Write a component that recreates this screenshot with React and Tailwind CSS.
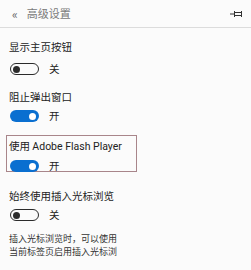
import React from "react";

const FONT = { fontFamily: '"Noto Sans CJK SC", "Noto Sans", sans-serif' };
const LATIN = { fontFamily: 'Roboto, "Noto Sans", sans-serif' };

const Toggle = ({ on }) =>
    on ? (
        <div className="w-[29px] h-[12px] rounded-full bg-[#0a6fd0] flex items-center justify-end pr-[3px]">
            <div className="w-[7px] h-[7px] rounded-full bg-white" />
        </div>
    ) : (
        <div className="w-[29px] h-[12px] rounded-full border-[1.5px] border-[#2b2b2b] flex items-center pl-[2px]">
            <div className="w-[7px] h-[7px] rounded-full bg-[#2b2b2b]" />
        </div>
    );

const Setting = ({ label, on, gap }) => (
    <div className="flex flex-col">
        <div className="h-[14px] leading-[14px] text-[10.5px] text-[#222] whitespace-nowrap">{label}</div>
        <div className={`flex items-center h-[14px] ${gap}`}>
            <div className="ml-[1px]">
                <Toggle on={on} />
            </div>
            <span className="ml-[10px] text-[10.5px] text-[#222] leading-[14px]">{on ? "开" : "关"}</span>
        </div>
    </div>
);

const PinIcon = () => (
    <svg width="14" height="8" viewBox="0 0 14 8" fill="none" stroke="#333" strokeWidth="1">
        <path d="M0 4H4.5M4.5 1V7M4.5 2.5H11.5V5.5H4.5M11.5 1V7" />
    </svg>
);

export default function App() {
    return (
        <div className="w-[251px] h-[270px] bg-[#fbfbfb] overflow-hidden" style={FONT}>
            <div className="h-[28px] flex items-center border-b border-[#dcdcdc]">
                <span className="ml-[12px] text-[12px] text-[#666] leading-none">«</span>
                <span className="ml-[9px] text-[11px] text-[#7a7a7a] leading-none">高级设置</span>
                <div className="ml-auto mr-[7px] flex items-center">
                    <PinIcon />
                </div>
            </div>
            <div className="pl-[9px] pt-[12px]">
                <Setting label="显示主页按钮" on={false} gap="mt-[8px]" />
                <div className="mt-[14px]">
                    <Setting label="阻止弹出窗口" on={true} gap="mt-[5px]" />
                </div>
                <div className="mt-[12px] -ml-[3px] w-[131px] h-[37px] border border-[#a8858a] pl-[2px] pt-[3px]">
                    <Setting
                        label={
                            <>
                                使用 <span style={LATIN} className="text-[10.5px]">Adobe Flash Player</span>
                            </>
                        }
                        on={true}
                        gap="mt-[6px]"
                    />
                </div>
                <div className="mt-[17px]">
                    <Setting label="始终使用插入光标浏览" on={false} gap="mt-[5px]" />
                </div>
                <div className="mt-[10px] w-[110px] text-[9px] leading-[13px] text-[#333] whitespace-nowrap">
                    <div>插入光标浏览时，可以使用</div>
                    <div>当前标签页启用插入光标浏</div>
                </div>
            </div>
        </div>
    );
}
